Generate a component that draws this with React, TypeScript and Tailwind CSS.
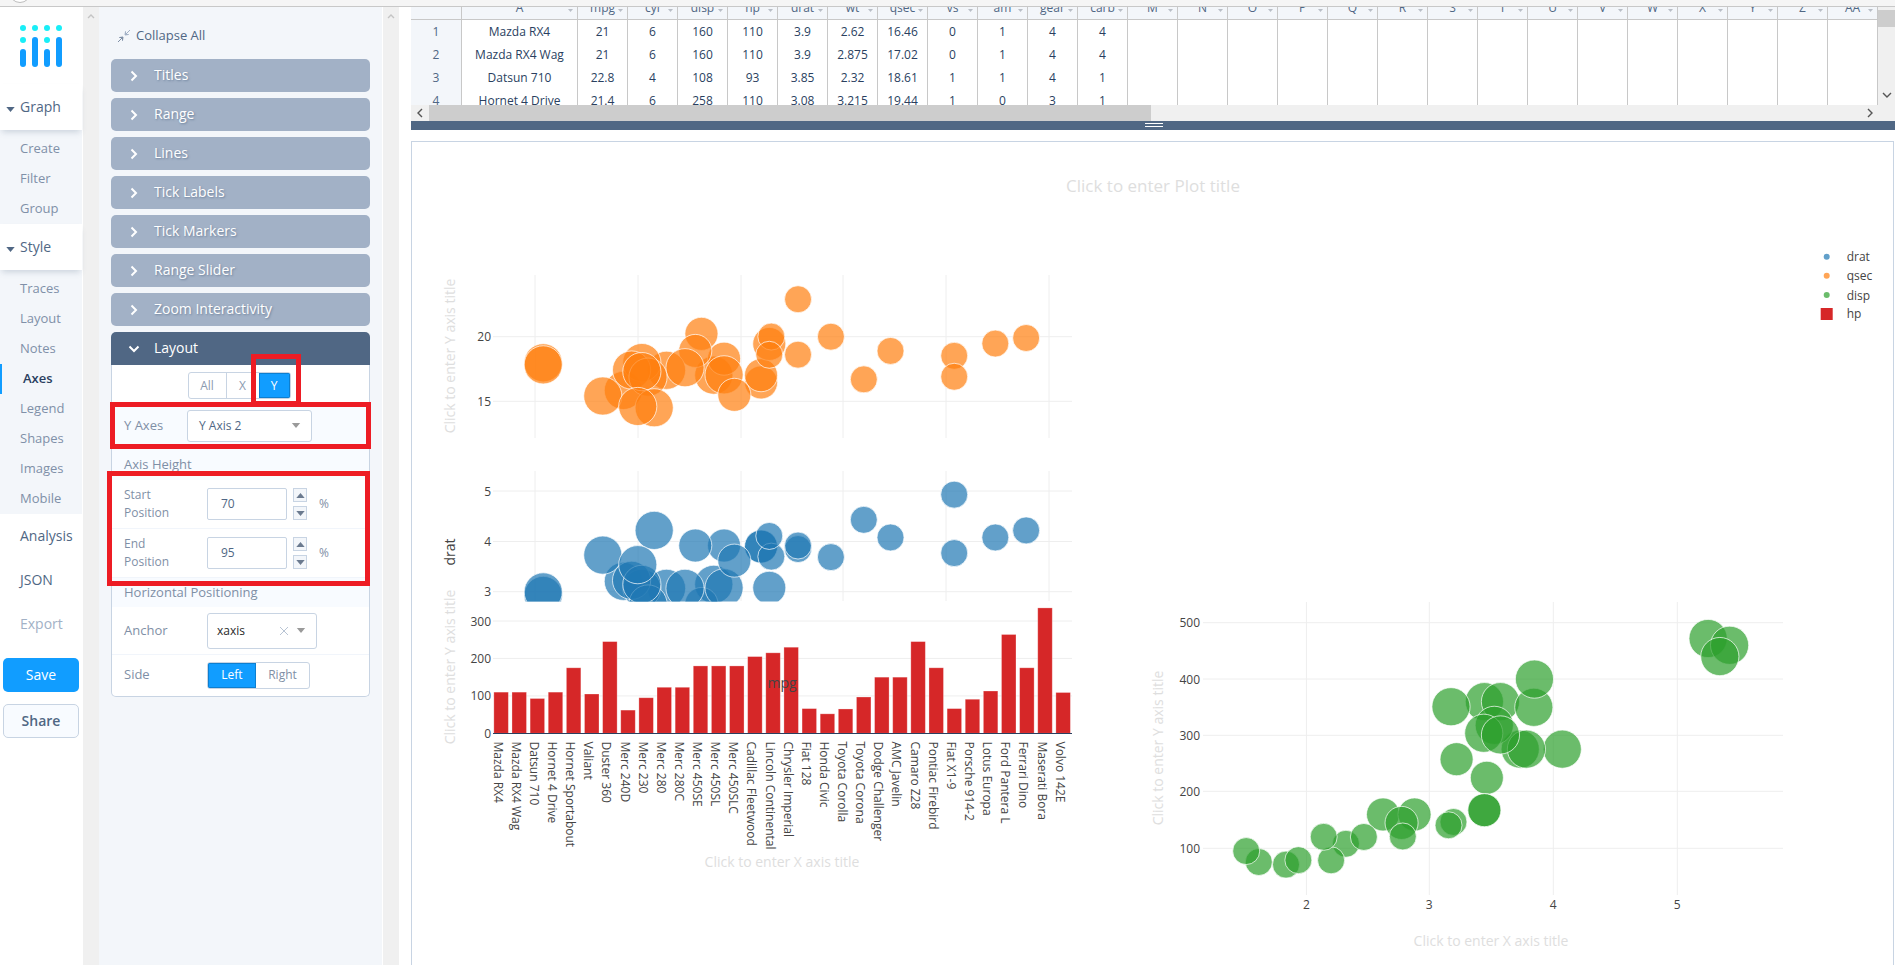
const cars: [string, number, number, number, number, number, number, number][] = [
  ["Mazda RX4", 21, 6, 160, 110, 3.9, 2.62, 16.46],
  ["Mazda RX4 Wag", 21, 6, 160, 110, 3.9, 2.875, 17.02],
  ["Datsun 710", 22.8, 4, 108, 93, 3.85, 2.32, 18.61],
  ["Hornet 4 Drive", 21.4, 6, 258, 110, 3.08, 3.215, 19.44],
  ["Hornet Sportabout", 18.7, 8, 360, 175, 3.15, 3.44, 17.02],
  ["Valiant", 18.1, 6, 225, 105, 2.76, 3.46, 20.22],
  ["Duster 360", 14.3, 8, 360, 245, 3.21, 3.57, 15.84],
  ["Merc 240D", 24.4, 4, 146.7, 62, 3.69, 3.19, 20],
  ["Merc 230", 22.8, 4, 140.8, 95, 3.92, 3.15, 22.9],
  ["Merc 280", 19.2, 6, 167.6, 123, 3.92, 3.44, 18.3],
  ["Merc 280C", 17.8, 6, 167.6, 123, 3.92, 3.44, 18.9],
  ["Merc 450SE", 16.4, 8, 275.8, 180, 3.07, 4.07, 17.4],
  ["Merc 450SL", 17.3, 8, 275.8, 180, 3.07, 3.73, 17.6],
  ["Merc 450SLC", 15.2, 8, 275.8, 180, 3.07, 3.78, 18],
  ["Cadillac Fleetwood", 10.4, 8, 472, 205, 2.93, 5.25, 17.98],
  ["Lincoln Continental", 10.4, 8, 460, 215, 3, 5.424, 17.82],
  ["Chrysler Imperial", 14.7, 8, 440, 230, 3.23, 5.345, 17.42],
  ["Fiat 128", 32.4, 4, 78.7, 66, 4.08, 2.2, 19.47],
  ["Honda Civic", 30.4, 4, 75.7, 52, 4.93, 1.615, 18.52],
  ["Toyota Corolla", 33.9, 4, 71.1, 65, 4.22, 1.835, 19.9],
  ["Toyota Corona", 21.5, 4, 120.1, 97, 3.7, 2.465, 20.01],
  ["Dodge Challenger", 15.5, 8, 318, 150, 2.76, 3.52, 16.87],
  ["AMC Javelin", 15.2, 8, 304, 150, 3.15, 3.435, 17.3],
  ["Camaro Z28", 13.3, 8, 350, 245, 3.73, 3.84, 15.41],
  ["Pontiac Firebird", 19.2, 8, 400, 175, 3.08, 3.845, 17.05],
  ["Fiat X1-9", 27.3, 4, 79, 66, 4.08, 1.935, 18.9],
  ["Porsche 914-2", 26, 4, 120.3, 91, 4.43, 2.14, 16.7],
  ["Lotus Europa", 30.4, 4, 95.1, 113, 3.77, 1.513, 16.9],
  ["Ford Pantera L", 15.8, 8, 351, 264, 4.22, 3.17, 14.5],
  ["Ferrari Dino", 19.7, 6, 145, 175, 3.62, 2.77, 15.5],
  ["Maserati Bora", 15, 8, 301, 335, 3.54, 3.57, 14.6],
  ["Volvo 142E", 21.4, 4, 121, 109, 4.11, 2.78, 18.6],
];

const columns = ["A", "mpg", "cyl", "disp", "hp", "drat", "wt", "qsec", "vs", "am", "gear", "carb", "M", "N", "O", "P", "Q", "R", "S", "T", "U", "V", "W", "X", "Y", "Z", "AA"];

const rows = [
  ["Mazda RX4", "21", "6", "160", "110", "3.9", "2.62", "16.46", "0", "1", "4", "4"],
  ["Mazda RX4 Wag", "21", "6", "160", "110", "3.9", "2.875", "17.02", "0", "1", "4", "4"],
  ["Datsun 710", "22.8", "4", "108", "93", "3.85", "2.32", "18.61", "1", "1", "4", "1"],
  ["Hornet 4 Drive", "21.4", "6", "258", "110", "3.08", "3.215", "19.44", "1", "0", "3", "1"],
];

const grid = "#eeeeee";
const tickColor = "#444444";
const placeholder = "#dedede";

const radius = (cyl: number) => 6.75 * Math.sqrt(cyl);
const mpgX = (mpg: number) => 535 + (mpg - 10) * 20.55;
const qsecY = (v: number) => 336.7 - (v - 20) * 12.92;
const dratY = (v: number) => 541.5 - (v - 4) * 50.4;
const wtX = (v: number) => 1306.4 + (v - 2) * 123.6;
const dispY = (v: number) => 848.3 - (v - 100) * 0.564;

function Caret({ className }: { className: string }) {
  return (
    <svg viewBox="0 0 10 6" className={className}>
      <polygon points="0,0 10,0 5,6" fill="currentColor" />
    </svg>
  );
}

function ScrollUp() {
  return (
    <div className="flex justify-center pt-[7px]">
      <svg width="8" height="5" viewBox="0 0 8 5">
        <polyline points="1,4 4,1 7,4" fill="none" stroke="#c4c4c4" strokeWidth="1.4" />
      </svg>
    </div>
  );
}

function NavTab({ label }: { label: string }) {
  return (
    <div className="relative z-10 flex h-[46px] items-center bg-white pb-[2px] pl-[6px] text-[14px] text-[#506784] shadow-[0_4px_6px_-2px_rgba(80,103,132,0.25)]">
      <Caret className="mt-[7px] mr-[5px] h-[5px] w-[9px] text-[#506784]" />
      {label}
    </div>
  );
}

function NavItem({ label, active }: { label: string; active?: boolean }) {
  if (active) {
    return (
      <div className="flex h-[30px] items-center border-l-2 border-[#119dff] pl-[21px] text-[13px] font-semibold text-[#2a3f5f]">
        {label}
      </div>
    );
  }
  return <div className="flex h-[30px] items-center pl-[20px] text-[13px] text-[#8090a8]">{label}</div>;
}

function Sidebar() {
  return (
    <div className="flex w-[83px] shrink-0 flex-col bg-white">
      <div className="h-[77px]">
        <svg width="83" height="77" viewBox="0 7 83 77">
          {[23, 35, 47, 59].map((x) => (
            <circle key={x} cx={x} cy={28} r={3} fill="#19eef7" />
          ))}
          <circle cx={23} cy={40} r={3} fill="#19eef7" />
          <circle cx={47} cy={40} r={3} fill="#19eef7" />
          <rect x={20} y={49} width={6} height={18} rx={3} fill="#119dff" />
          <rect x={32} y={37} width={6} height={30} rx={3} fill="#119dff" />
          <rect x={44} y={49} width={6} height={18} rx={3} fill="#119dff" />
          <rect x={56} y={37} width={6} height={30} rx={3} fill="#119dff" />
        </svg>
      </div>
      <div className="w-[82px]">
        <NavTab label="Graph" />
        <div className="bg-[#f3f6fa] pt-[4px]">
          <NavItem label="Create" />
          <NavItem label="Filter" />
          <NavItem label="Group" />
        </div>
        <NavTab label="Style" />
        <div className="bg-[#f3f6fa] pt-[4px]">
          <NavItem label="Traces" />
          <NavItem label="Layout" />
          <NavItem label="Notes" />
          <NavItem label="Axes" active />
          <NavItem label="Legend" />
          <NavItem label="Shapes" />
          <NavItem label="Images" />
          <NavItem label="Mobile" />
        </div>
        <div className="flex h-[44px] items-center pb-[2px] pl-[20px] text-[14px] text-[#506784]">Analysis</div>
        <div className="flex h-[44px] items-center pb-[2px] pl-[20px] text-[14px] text-[#506784]">JSON</div>
        <div className="flex h-[44px] items-center pb-[2px] pl-[20px] text-[14px] text-[#a2b1c6]">Export</div>
        <div className="mx-[3px] mt-[12px] flex h-[34px] w-[76px] items-center justify-center rounded-[5px] bg-[#119dff] pb-[2px] text-[14px] text-white">
          Save
        </div>
        <div className="mx-[3px] mt-[12px] flex h-[34px] w-[76px] items-center justify-center rounded-[5px] border border-[#c8d4e3] bg-[#f8fbff] pb-[1px] text-[14px] font-semibold text-[#506784]">
          Share
        </div>
      </div>
    </div>
  );
}

function FoldedSection({ title }: { title: string }) {
  return (
    <div className="mb-[6px] flex h-[33px] items-center rounded-[5px] bg-[#a2b1c6] pb-[2px] text-[14px] text-white [text-shadow:1px_1px_2px_rgba(80,103,132,0.6)]">
      <svg width="8" height="12" viewBox="0 0 8 12" className="mt-[2px] ml-[19px] mr-[16px]">
        <polyline points="1.5,1.5 6,6 1.5,10.5" fill="none" stroke="white" strokeWidth="2" />
      </svg>
      {title}
    </div>
  );
}

function SpinBox({ label1, value }: { label1: string; value: string }) {
  return (
    <div className="flex h-[49px] items-center border-b border-[#f1f5fb] pl-[12px]">
      <div className="w-[83px] text-[12px] leading-[18px] text-[#7f8fa6]">
        {label1}
        <br />
        Position
      </div>
      <div className="flex h-[32px] w-[80px] items-center rounded-[2px] border border-[#c8d4e3] pl-[13px] text-[12px] text-[#506784]">
        {value}
      </div>
      <div className="ml-[6px] flex w-[14px] flex-col gap-[4px]">
        <div className="flex h-[14px] items-center justify-center border border-[#c8d4e3] bg-[#f3f6fa]">
          <Caret className="h-[5px] w-[9px] rotate-180 text-[#6b7a8f]" />
        </div>
        <div className="flex h-[14px] items-center justify-center border border-[#c8d4e3] bg-[#f3f6fa]">
          <Caret className="h-[5px] w-[9px] text-[#6b7a8f]" />
        </div>
      </div>
      <div className="ml-[12px] text-[12px] text-[#7f8fa6]">%</div>
    </div>
  );
}

function StylePanel() {
  return (
    <div className="w-[283px] shrink-0 bg-[#f3f6fa] px-[12px]">
      <div className="mt-[19px] mb-[13px] flex h-[20px] items-center pl-[7px] text-[13px] text-[#506784]">
        <svg width="12" height="12" viewBox="0 0 12 12" className="mr-[6px]">
          <polygon points="12,0 7.5,4.5 10.5,4.5 7,5 7.5,1.5 7.5,4.5" fill="#a2b1c6" stroke="#a2b1c6" />
          <polygon points="0,12 4.5,7.5 1.5,7.5 5,7 4.5,10.5 4.5,7.5" fill="#7f8fa6" stroke="#7f8fa6" />
        </svg>
        Collapse All
      </div>
      <FoldedSection title="Titles" />
      <FoldedSection title="Range" />
      <FoldedSection title="Lines" />
      <FoldedSection title="Tick Labels" />
      <FoldedSection title="Tick Markers" />
      <FoldedSection title="Range Slider" />
      <FoldedSection title="Zoom Interactivity" />
      <div className="flex h-[33px] items-center rounded-t-[5px] bg-[#506784] pb-[2px] text-[14px] text-white">
        <svg width="12" height="8" viewBox="0 0 12 8" className="mt-[2px] ml-[17px] mr-[14px]">
          <polyline points="1.5,1.5 6,6 10.5,1.5" fill="none" stroke="white" strokeWidth="2" />
        </svg>
        Layout
      </div>
      <div className="h-[332px] rounded-b-[5px] border border-t-0 border-[#c8d4e3] bg-white">
        <div className="flex h-[37px] justify-center pt-[7px] pr-[3px]">
          <div className="flex h-[27px] w-[103px] overflow-hidden rounded-[3px] border border-[#c8d4e3] text-[12px] text-[#8c9bb0]">
            <div className="flex w-[38px] items-center justify-center border-r border-[#c8d4e3]">All</div>
            <div className="flex w-[32px] items-center justify-center">X</div>
            <div className="flex flex-1 items-center justify-center border border-[#0d7fd0] bg-[#119dff] text-white">Y</div>
          </div>
        </div>
        <div className="flex h-[47px] items-center bg-[#f8fbff] pl-[12px] text-[13px] text-[#7f8fa6]">
          <div className="w-[63px]">Y Axes</div>
          <div className="flex h-[32px] w-[125px] items-center justify-between rounded-[3px] border border-[#c8d4e3] bg-white pr-[10px] pl-[11px] text-[12px] text-[#506784]">
            Y Axis 2
            <Caret className="h-[5px] w-[10px] text-[#9a9a9a]" />
          </div>
        </div>
        <div className="flex h-[31px] items-center bg-[#f8fbff] pl-[12px] text-[13px] text-[#7f8fa6]">Axis Height</div>
        <SpinBox label1="Start" value="70" />
        <SpinBox label1="End" value="95" />
        <div className="flex h-[29px] items-center bg-[#f8fbff] pl-[12px] text-[13px] text-[#7f8fa6]">Horizontal Positioning</div>
        <div className="flex h-[48px] items-center border-b border-[#f1f5fb] pl-[12px] text-[13px] text-[#7f8fa6]">
          <div className="w-[83px]">Anchor</div>
          <div className="flex h-[36px] w-[110px] items-center rounded-[3px] border border-[#c8d4e3] pl-[9px] text-[12px] text-[#2a2a2a]">
            <span className="flex-1">xaxis</span>
            <svg width="10" height="10" viewBox="0 0 10 10" className="mr-[7px]">
              <path d="M1 1 L9 9 M9 1 L1 9" stroke="#b8c4d4" strokeWidth="1" />
            </svg>
            <Caret className="mr-[10px] h-[5px] w-[10px] text-[#9a9a9a]" />
          </div>
        </div>
        <div className="flex h-[40px] items-center pl-[12px] text-[13px] text-[#7f8fa6]">
          <div className="w-[83px]">Side</div>
          <div className="flex h-[27px] w-[103px] overflow-hidden rounded-[3px] border border-[#c8d4e3] text-[12px]">
            <div className="flex w-[48px] items-center justify-center border border-[#0d7fd0] bg-[#119dff] text-white">Left</div>
            <div className="flex flex-1 items-center justify-center">Right</div>
          </div>
        </div>
      </div>
    </div>
  );
}

function SheetRow({ cells, index, clipped }: { cells: string[]; index: number; clipped?: boolean }) {
  return (
    <div className={`flex ${clipped ? "h-[16px] overflow-hidden" : "h-[23px] border-b border-[#c8c8c8]"}`}>
      <div className="flex h-[23px] w-[51px] shrink-0 items-center justify-center border-r border-[#c8c8c8] bg-[#f3f6fa] text-[12px] text-[#506784]">
        {index}
      </div>
      {columns.map((c, i) => (
        <div
          key={c}
          className={`flex h-[23px] shrink-0 items-center justify-center border-r border-[#c8c8c8] bg-white text-[12px] text-[#2a3f5f] ${i === 0 ? "w-[116px]" : "w-[50px]"}`}
        >
          {cells[i]}
        </div>
      ))}
    </div>
  );
}

function Sheet() {
  return (
    <div className="flex h-[98px]">
      <div className="w-[1467px] overflow-hidden">
        <div className="flex h-[13px] border-b border-[#c8c8c8] bg-[#f3f6fa]">
          <div className="w-[51px] shrink-0 border-r border-[#c8c8c8]" />
          {columns.map((c, i) => (
            <div
              key={c}
              className={`relative flex h-[12px] shrink-0 justify-center overflow-hidden border-r border-[#c8c8c8] text-[12px] leading-[12px] text-[#506784] ${i === 0 ? "w-[116px]" : "w-[50px]"}`}
            >
              <span className="-mt-[5px]">{c}</span>
              <Caret className="absolute top-[2px] right-[4px] h-[3px] w-[5px] text-[#b9bec6]" />
            </div>
          ))}
        </div>
        {rows.map((r, i) => (
          <SheetRow key={i} cells={r} index={i + 1} clipped={i === 3} />
        ))}
      </div>
      <div className="flex w-[17px] flex-col items-center bg-[#f0f0f0]">
        <div className="mt-[3px] h-[17px] w-full bg-[#cdcdcd]" />
        <svg width="10" height="6" viewBox="0 0 10 6" className="mt-[65px]">
          <polyline points="1,1 5,5 9,1" fill="none" stroke="#555" strokeWidth="1.4" />
        </svg>
      </div>
    </div>
  );
}

function SheetScrollbar() {
  return (
    <div className="flex h-[16px] items-center bg-[#f0f0f0]">
      <div className="flex w-[18px] justify-center">
        <svg width="6" height="10" viewBox="0 0 6 10">
          <polyline points="5,1 1,5 5,9" fill="none" stroke="#555" strokeWidth="1.4" />
        </svg>
      </div>
      <div className="h-full w-[722px] bg-[#cdcdcd]" />
      <div className="flex-1" />
      <div className="flex w-[50px] justify-center">
        <svg width="6" height="10" viewBox="0 0 6 10">
          <polyline points="1,1 5,5 1,9" fill="none" stroke="#555" strokeWidth="1.4" />
        </svg>
      </div>
    </div>
  );
}

function Bubbles({ points, color }: { points: [number, number, number][]; color: string }) {
  return (
    <g>
      {points.map(([x, y, r], i) => (
        <circle key={i} cx={x} cy={y} r={r} fill={color} fillOpacity={0.7} stroke="white" strokeOpacity={0.7} strokeWidth={1} />
      ))}
    </g>
  );
}

function HLines({ ys, x1, x2 }: { ys: number[]; x1: number; x2: number }) {
  return (
    <>
      {ys.map((y) => (
        <line key={y} x1={x1} x2={x2} y1={y} y2={y} stroke={grid} />
      ))}
    </>
  );
}

function VLines({ xs, y1, y2 }: { xs: number[]; y1: number; y2: number }) {
  return (
    <>
      {xs.map((x) => (
        <line key={x} x1={x} x2={x} y1={y1} y2={y2} stroke={grid} />
      ))}
    </>
  );
}

function Ticks({ items, x }: { items: [string, number][]; x: number }) {
  return (
    <>
      {items.map(([t, y]) => (
        <text key={t} x={x} y={y} textAnchor="end" dominantBaseline="central" fontSize={12} fill={tickColor}>
          {t}
        </text>
      ))}
    </>
  );
}

function VTitle({ x, y, text, color }: { x: number; y: number; text: string; color: string }) {
  return (
    <text transform={`translate(${x},${y}) rotate(-90)`} textAnchor="middle" dominantBaseline="central" fontSize={14} fill={color}>
      {text}
    </text>
  );
}

function Plots() {
  const mpgGrid = [535, 638, 741, 843, 946, 1049];
  return (
    <svg width="1482" height="824" viewBox="412 142 1482 824" className="block">
      <defs>
        <clipPath id="dratClip">
          <rect x={493} y={470} width={580} height={131.5} />
        </clipPath>
      </defs>
      <text x={1153} y={185} textAnchor="middle" dominantBaseline="central" fontSize={17} fill={placeholder}>
        Click to enter Plot title
      </text>

      <VLines xs={mpgGrid} y1={275} y2={438} />
      <HLines ys={[336.7, 401.3]} x1={493} x2={1072} />
      <Ticks items={[["20", 336.7], ["15", 401.3]]} x={491} />
      <VTitle x={449} y={356} text="Click to enter Y axis title" color={placeholder} />
      <Bubbles color="#ff7f0e" points={cars.map((c) => [mpgX(c[1]), qsecY(c[7]), radius(c[2])])} />

      <VLines xs={mpgGrid} y1={471} y2={601} />
      <HLines ys={[491, 541.5, 591.7]} x1={493} x2={1072} />
      <Ticks items={[["5", 491], ["4", 541.5], ["3", 591.7]]} x={491} />
      <VTitle x={449} y={552} text="drat" color={tickColor} />
      <g clipPath="url(#dratClip)">
        <Bubbles color="#1f77b4" points={cars.map((c) => [mpgX(c[1]), dratY(c[5]), radius(c[2])])} />
      </g>

      <HLines ys={[621, 658.4, 695.9]} x1={493} x2={1072} />
      <Ticks items={[["300", 621], ["200", 658.4], ["100", 695.9], ["0", 733.3]]} x={491} />
      <VTitle x={449} y={667} text="Click to enter Y axis title" color={placeholder} />
      {cars.map((c, i) => {
        const h = c[4] * 0.3743;
        return <rect key={c[0]} x={501.1 + i * 18.13 - 7.25} y={733.3 - h} width={14.5} height={h} fill="#d62728" stroke="white" strokeOpacity={0.35} strokeWidth={0.8} />;
      })}
      <line x1={493} x2={1072} y1={733.5} y2={733.5} stroke="#2a3f5f" strokeWidth={1} />
      {cars.map((c, i) => (
        <text key={c[0]} transform={`translate(${493.6 + i * 18.13},741.5) rotate(90)`} fontSize={12} fill={tickColor}>
          {c[0]}
        </text>
      ))}
      <text x={782} y={682} textAnchor="middle" dominantBaseline="central" fontSize={14} fill={tickColor}>
        mpg
      </text>
      <text x={782} y={861} textAnchor="middle" dominantBaseline="central" fontSize={14} fill={placeholder}>
        Click to enter X axis title
      </text>

      <VLines xs={[1306.4, 1429.3, 1553.3, 1677.3]} y1={602} y2={895} />
      <HLines ys={[622.7, 679, 735.3, 791.3, 848.3]} x1={1203} x2={1783} />
      <Ticks items={[["500", 622.7], ["400", 679], ["300", 735.3], ["200", 791.3], ["100", 848.3]]} x={1200} />
      {[["2", 1306.4], ["3", 1429.3], ["4", 1553.3], ["5", 1677.3]].map(([t, x]) => (
        <text key={t} x={x} y={904} textAnchor="middle" dominantBaseline="central" fontSize={12} fill={tickColor}>
          {t}
        </text>
      ))}
      <VTitle x={1157} y={748} text="Click to enter Y axis title" color={placeholder} />
      <Bubbles color="#2ca02c" points={cars.map((c) => [wtX(c[6]), dispY(c[3]), radius(c[2])])} />
      <text x={1491} y={940} textAnchor="middle" dominantBaseline="central" fontSize={14} fill={placeholder}>
        Click to enter X axis title
      </text>

      <circle cx={1826.7} cy={256.7} r={3} fill="#1f77b4" fillOpacity={0.7} />
      <circle cx={1826.7} cy={275.7} r={3} fill="#ff7f0e" fillOpacity={0.7} />
      <circle cx={1826.7} cy={295} r={3} fill="#2ca02c" fillOpacity={0.7} />
      <rect x={1820.7} y={308} width={12} height={12} fill="#d62728" />
      {[["drat", 256.7], ["qsec", 275.7], ["disp", 295], ["hp", 313]].map(([t, y]) => (
        <text key={t} x={1846.7} y={y} dominantBaseline="central" fontSize={12} fill={tickColor}>
          {t}
        </text>
      ))}
    </svg>
  );
}

export default function App() {
  return (
    <div className="relative h-[965px] w-[1895px] overflow-hidden bg-white font-['Open_Sans',sans-serif]">
      <div className="h-[7px] overflow-hidden border-b border-[#c8c8c8] bg-[#f5f5f5]">
        <div className="-mt-[19px] ml-[9px] h-[22px] w-[22px] rounded-full border border-[#bdbdbd] bg-white" />
      </div>
      <div className="flex h-[958px]">
        <Sidebar />
        <div className="w-[16px] shrink-0 bg-[#f0f0f0]">
          <ScrollUp />
        </div>
        <StylePanel />
        <div className="w-[1px] shrink-0 bg-white" />
        <div className="w-[16px] shrink-0 bg-[#f0f0f0]">
          <ScrollUp />
        </div>
        <div className="min-w-0 flex-1 pl-[12px]">
          <Sheet />
          <SheetScrollbar />
          <div className="relative h-[9px] bg-[#506784]">
            <div className="absolute top-[2px] left-[734px] h-[4px] w-[18px] border-y border-white" />
          </div>
          <div className="mt-[11px] mr-[1px] h-[900px] border border-[#c8d4e3]">
            <Plots />
          </div>
        </div>
      </div>
      {/* red marks drawn over the screenshot */}
      <div className="absolute top-[354px] left-[251px] h-[52px] w-[50px] border-[5px] border-[#ed1c24]" />
      <div className="absolute top-[402px] left-[110px] h-[47px] w-[261px] border-[5px] border-[#ed1c24]" />
      <div className="absolute top-[471px] left-[107px] h-[115px] w-[263px] border-[5px] border-[#ed1c24]" />
    </div>
  );
}
